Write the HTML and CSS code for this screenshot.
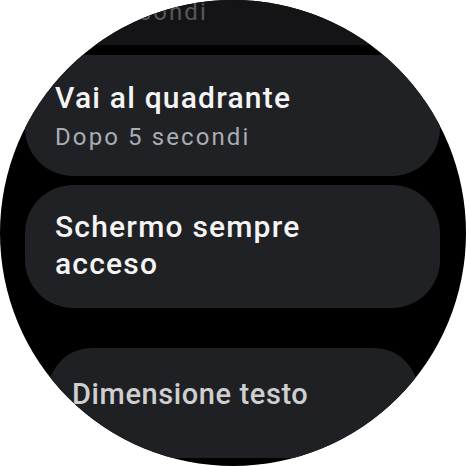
FILE: index.html
```html
<!DOCTYPE html>
<html lang="it">
<head>
<meta charset="utf-8">
<title>Display</title>
<link rel="stylesheet" href="styles.css">
</head>
<body>
<div class="screen">
  <div class="list">
    <div class="chip chip-top">
      <span class="chip-sub faded">15 secondi</span>
    </div>
    <div class="chip chip-main">
      <span class="chip-title">Vai al quadrante</span>
      <span class="chip-sub">Dopo 5 secondi</span>
    </div>
    <div class="chip chip-main chip-two">
      <span class="chip-title">Schermo sempre<br>acceso</span>
    </div>
    <div class="chip chip-bottom">
      <span class="chip-title dim">Dimensione testo</span>
    </div>
  </div>
</div>
</body>
</html>
```
FILE: styles.css
```css
html, body {
  margin: 0;
  padding: 0;
  background: #ffffff;
}
body {
  width: 466px;
  height: 466px;
  overflow: hidden;
  font-family: Roboto, "Noto Sans", sans-serif;
}
.screen {
  width: 466px;
  height: 466px;
  border-radius: 50%;
  background: #000000;
  overflow: hidden;
}
.list {
  display: flex;
  flex-direction: column;
  padding: 0 26px 0 25px;
}
.chip {
  display: flex;
  flex-direction: column;
  background: #202124;
  border-radius: 48px;
}
.chip-top {
  height: 45px;
  box-sizing: border-box;
  background: #141416;
  border-radius: 0 0 48px 48px;
  padding-left: 45px;
}
.chip-main {
  margin-top: 10px;
  padding: 24px 30px 24px 30px;
}
.chip-two {
  margin-top: 9px;
  padding: 23px 30px 26px 30px;
}
.chip-bottom {
  margin: 40px 22px 0 23px;
  height: 110px;
  box-sizing: border-box;
  padding: 28px 20px 0 24px;
  border-radius: 44px;
  background: #1f2023;
}
.chip-title {
  font-size: 30px;
  line-height: 37px;
  letter-spacing: 1.2px;
  color: #f4f4f5;
  font-weight: 500;
  white-space: nowrap;
}
.chip-sub {
  font-size: 24px;
  line-height: 30px;
  letter-spacing: 2.1px;
  margin-top: 6px;
  color: #a9acb3;
  font-weight: 400;
  white-space: nowrap;
}
.chip-top .chip-sub {
  margin-top: 0;
  line-height: 24px;
}
.chip-bottom .chip-title {
  font-size: 29px;
  letter-spacing: 0.6px;
}
.faded {
  color: #56585d;
}
.dim {
  color: #cfcfd0;
}
```
